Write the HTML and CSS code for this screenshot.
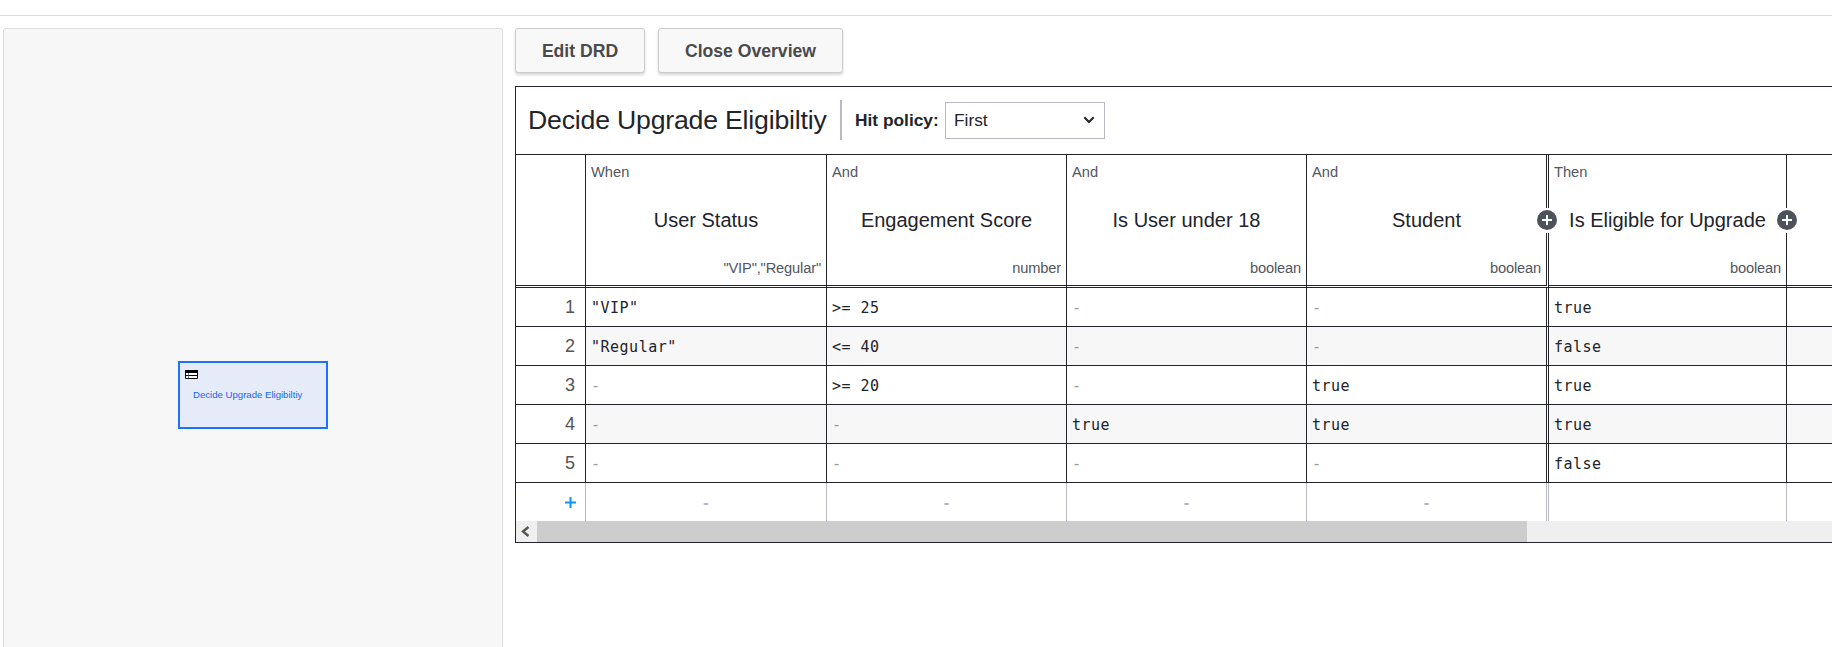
FILE: index.html
```html
<!DOCTYPE html>
<html lang="en">
<head>
<meta charset="utf-8">
<title>Decide Upgrade Eligibiltiy</title>
<link rel="stylesheet" href="styles.css">
</head>
<body>
<header class="topbar"></header>
<main class="workspace">
  <aside class="overview">
    <div class="decision-node">
      <svg class="node-icon" width="13" height="9" viewBox="0 0 13 9"><path fill="#fff" stroke="#000" d="M.5.5h12v8h-12z"/><path fill="#000" d="M0 0h13v3H0z"/><path stroke="#000" d="M0 5.500h13"/><path stroke="#345" stroke-width=".7" d="M3.500 3v5"/></svg>
      <span class="node-label">Decide Upgrade Eligibiltiy</span>
    </div>
  </aside>
  <section class="editor">
    <div class="actions">
      <button class="btn btn-edit">Edit DRD</button>
      <button class="btn btn-close">Close Overview</button>
    </div>
    <div class="decision-table">
      <div class="table-head">
        <h1 class="title">Decide Upgrade Eligibiltiy</h1>
        <div class="policy">
          <span class="policy-label">Hit policy:</span>
          <div class="select"><span>First</span><svg width="12" height="8" viewBox="0 0 12 8"><path d="M1.300 1.300 6 6l4.700-4.700" fill="none" stroke="#22242a" stroke-width="2"/></svg></div>
        </div>
      </div>
      <div class="row columns">
        <div class="cell"></div>
        <div class="cell head"><span class="clause">When</span><span class="name">User Status</span><span class="type">"VIP","Regular"</span></div>
        <div class="cell head"><span class="clause">And</span><span class="name">Engagement Score</span><span class="type">number</span></div>
        <div class="cell head"><span class="clause">And</span><span class="name">Is User under 18</span><span class="type">boolean</span></div>
        <div class="cell head last-input"><span class="clause">And</span><span class="name">Student</span><span class="type">boolean</span><span class="add add-input"><svg width="20" height="20" viewBox="0 0 20 20"><circle cx="10" cy="10" r="10" fill="#4d525d"/><path d="M10 5v10M5 10h10" stroke="#fff" stroke-width="2"/></svg></span></div>
        <div class="cell head"><span class="clause">Then</span><span class="name">Is Eligible for Upgrade</span><span class="type">boolean</span><span class="add add-output"><svg width="20" height="20" viewBox="0 0 20 20"><circle cx="10" cy="10" r="10" fill="#4d525d"/><path d="M10 5v10M5 10h10" stroke="#fff" stroke-width="2"/></svg></span></div>
        <div class="cell"></div>
      </div>
      <div class="row rule"><div class="cell index">1</div><div class="cell">"VIP"</div><div class="cell">&gt;= 25</div><div class="cell any">-</div><div class="cell any last-input">-</div><div class="cell">true</div><div class="cell"></div></div>
      <div class="row rule even"><div class="cell index">2</div><div class="cell">"Regular"</div><div class="cell">&lt;= 40</div><div class="cell any">-</div><div class="cell any last-input">-</div><div class="cell">false</div><div class="cell"></div></div>
      <div class="row rule"><div class="cell index">3</div><div class="cell any">-</div><div class="cell">&gt;= 20</div><div class="cell any">-</div><div class="cell last-input">true</div><div class="cell">true</div><div class="cell"></div></div>
      <div class="row rule even"><div class="cell index">4</div><div class="cell any">-</div><div class="cell any">-</div><div class="cell">true</div><div class="cell last-input">true</div><div class="cell">true</div><div class="cell"></div></div>
      <div class="row rule"><div class="cell index">5</div><div class="cell any">-</div><div class="cell any">-</div><div class="cell any">-</div><div class="cell any last-input">-</div><div class="cell">false</div><div class="cell"></div></div>
      <div class="row new-rule"><div class="cell plus"><svg width="11" height="11" viewBox="0 0 11 11"><path d="M5.500 0v11M0 5.500h11" stroke="#0d94ff" stroke-width="2"/></svg></div><div class="cell">-</div><div class="cell">-</div><div class="cell">-</div><div class="cell last-input">-</div><div class="cell"></div><div class="cell"></div></div>
      <div class="scrollbar"><div class="scroll-arrow"><svg width="9" height="11" viewBox="0 0 9 11"><path d="M7.500 1 2 5.500 7.500 10" fill="none" stroke="#555" stroke-width="2.400"/></svg></div><div class="thumb"></div></div>
    </div>
  </section>
</main>
</body>
</html>
```
FILE: styles.css
```css
* { box-sizing: border-box; }
body {
  margin: 0;
  height: 647px;
  overflow: hidden;
  background: #fff;
  color: #22242a;
  font-family: "Liberation Sans", Arial, sans-serif;
}
.topbar { height: 16px; border-bottom: 1px solid #ddd; }
.workspace {
  display: flex;
  gap: 12px;
  height: 631px;
  padding: 12px 0 0 3px;
  overflow: hidden;
}
.overview {
  flex: none;
  width: 500px;
  padding: 332px 0 0 174px;
  border: 1px solid #ddd;
  border-bottom: 0;
  border-radius: 3px 3px 0 0;
  background: #f7f7f7;
}
.decision-node {
  display: flex;
  flex-direction: column;
  width: 150px;
  height: 68px;
  padding: 7px 0 0 5px;
  border: 2px solid #2070ff;
  background: #e5ebf8;
  color: #1666f5;
}
.node-icon { display: block; }
.node-label { margin: 10px 0 0 8px; font-size: 9.6px; line-height: 12px; white-space: nowrap; }
.editor { flex: none; width: 1400px; }
.actions { display: flex; gap: 13px; height: 58px; }
.btn {
  height: 45px;
  padding: 2px 0 0;
  border: 1px solid #ccc;
  border-radius: 3px;
  background: #f8f8f8;
  box-shadow: 0 2px 3px rgba(0, 0, 0, .16);
  color: #4a4a4a;
  font: bold 17.6px "Liberation Sans", Arial, sans-serif;
}
.btn-edit { width: 130px; }
.btn-close { width: 185px; }
.decision-table { border: 1px solid #22242a; background: #fff; }
.table-head {
  display: flex;
  align-items: center;
  height: 68px;
  padding: 0 0 1px 12px;
  border-bottom: 1px solid #22242a;
}
.title {
  width: 312px;
  margin: 0;
  font-size: 26.67px;
  font-weight: normal;
  letter-spacing: -.2px;
  white-space: nowrap;
}
.policy {
  display: flex;
  align-items: center;
  height: 40px;
  padding-left: 13px;
  border-left: 2px solid #b9bac6;
}
.policy-label { width: 90px; font-size: 17.33px; font-weight: bold; }
.select {
  display: flex;
  align-items: center;
  justify-content: space-between;
  width: 160px;
  height: 37px;
  padding: 0 9px 0 8px;
  border: 1px solid #b9bac6;
  font-size: 17.33px;
}
.row { display: grid; grid-template-columns: 70px 241px 240px 240px 242px 238px 1fr; }
.cell { border-right: 1px solid #22242a; border-bottom: 1px solid #22242a; }
.last-input { border-right: 3px double #22242a; }
.columns { height: 133px; }
.columns .cell { border-bottom: 3px double #22242a; }
.head {
  position: relative;
  display: flex;
  flex-direction: column;
  justify-content: space-between;
  padding: 8px 5px;
}
.clause, .type { color: #53565f; font-size: 14.67px; line-height: 18px; }
.type { letter-spacing: -.15px; text-align: right; }
.name { font-size: 20px; line-height: 24px; text-align: center; white-space: nowrap; }
.add {
  position: absolute;
  z-index: 1;
  top: 53px;
  display: flex;
  align-items: flex-start;
  height: 25px;
  padding-top: 2px;
  background: #fff;
}
.add-input { right: -11px; }
.add-output { right: -11px; }
.rule .cell {
  height: 39px;
  padding: 1px 0 0 5px;
  font: 15px/38px "DejaVu Sans Mono", monospace;
  letter-spacing: .5px;
}
.rule .any { color: #999; }
.rule .index {
  padding: 0 10px 0 0;
  color: #555;
  font: 18px/38px "Liberation Sans", Arial, sans-serif;
  letter-spacing: 0;
  text-align: right;
}
.even .cell { background: #f7f7f7; }
.even .index { background: #fff; }
.new-rule .cell {
  height: 38px;
  border-bottom: 0;
  border-right-color: #b9bac6;
  color: #b4b5c2;
  font-size: 17.33px;
  font-weight: bold;
  line-height: 38px;
  text-align: center;
}
.new-rule .plus { display: flex; align-items: center; justify-content: flex-end; padding-right: 9px; }
.scrollbar { display: flex; height: 21px; background: #efefef; }
.scroll-arrow { display: flex; align-items: center; justify-content: center; width: 21px; padding-right: 2px; }
.thumb { width: 990px; background: #cdcdcd; }
```
